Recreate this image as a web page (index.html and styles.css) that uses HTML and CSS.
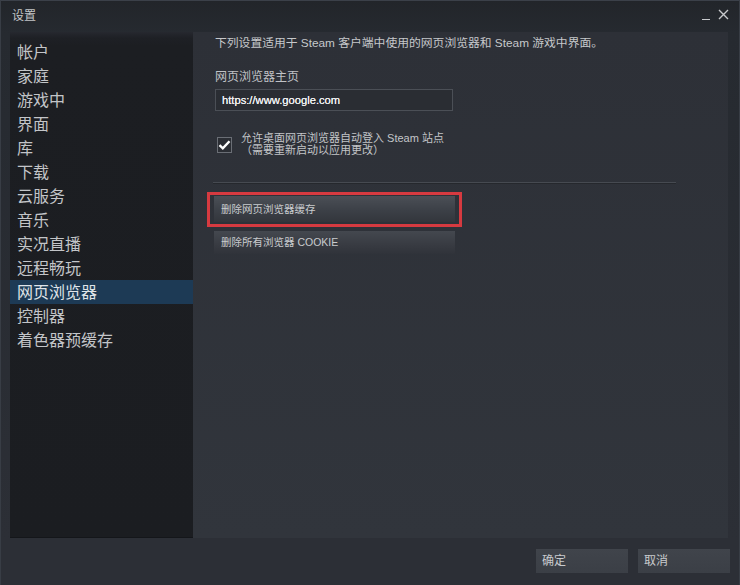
FILE: index.html
```html
<!DOCTYPE html>
<html lang="zh-CN">
<head>
<meta charset="utf-8">
<title>设置</title>
<link rel="stylesheet" href="styles.css">
</head>
<body>
<div class="window">
  <div class="titlebar">
    <span class="title">设置</span>
    <div class="controls">
      <span class="ctl-min"></span>
      <svg class="ctl-close" width="11" height="11" viewBox="0 0 11 11"><path d="M1 1L10 10M10 1L1 10" stroke="#c8cacd" stroke-width="1.4" fill="none"/></svg>
    </div>
  </div>
  <div class="main">
    <nav class="sidebar">
      <div class="item">帐户</div>
      <div class="item">家庭</div>
      <div class="item">游戏中</div>
      <div class="item">界面</div>
      <div class="item">库</div>
      <div class="item">下载</div>
      <div class="item">云服务</div>
      <div class="item">音乐</div>
      <div class="item">实况直播</div>
      <div class="item">远程畅玩</div>
      <div class="item active">网页浏览器</div>
      <div class="item">控制器</div>
      <div class="item">着色器预缓存</div>
    </nav>
    <section class="content">
      <p class="intro">下列设置适用于 Steam 客户端中使用的网页浏览器和 Steam 游戏中界面。</p>
      <p class="label">网页浏览器主页</p>
      <div class="input">https://www.google.com</div>
      <div class="check-row">
        <span class="checkbox"><svg width="13" height="12" viewBox="0 0 13 12"><path d="M1.5 6.2L4.8 9.4L11.5 2.2" stroke="#ffffff" stroke-width="2.4" fill="none"/></svg></span>
        <div class="check-text">
          <div>允许桌面网页浏览器自动登入 Steam 站点</div>
          <div>（需要重新启动以应用更改）</div>
        </div>
      </div>
      <div class="sep"></div>
      <div class="highlight"><div class="btn">删除网页浏览器缓存</div></div>
      <div class="btn btn2">删除所有浏览器 COOKIE</div>
    </section>
  </div>
  <div class="footer">
    <div class="fbtn">确定</div>
    <div class="fbtn">取消</div>
  </div>
</div>
</body>
</html>
```
FILE: styles.css
```css
html, body {
  margin: 0;
  padding: 0;
}
body {
  width: 740px;
  height: 585px;
  overflow: hidden;
  background: #2b2e34;
  font-family: "Liberation Sans", "Noto Sans CJK SC", sans-serif;
}
.window {
  width: 740px;
  height: 585px;
  box-sizing: border-box;
  border-top: 1px solid #3b4049;
  border-left: 1px solid #383d45;
  border-right: 1px solid #383d45;
  background: linear-gradient(180deg, #22252a 0px, #262a30 32px, #2c2f36 540px);
  display: flex;
  flex-direction: column;
}
.titlebar {
  height: 31px;
  display: flex;
  align-items: center;
  justify-content: space-between;
  padding: 0 10px 4px 11px;
  box-sizing: border-box;
}
.title {
  font-size: 12px;
  color: #c3c5c8;
}
.controls {
  display: flex;
  align-items: center;
  gap: 8px;
}
.ctl-min {
  width: 8px;
  height: 1px;
  background: #c8cacd;
  margin-top: 10px;
}
.main {
  display: flex;
  margin-left: 9px;
  height: 506px;
}
.sidebar {
  width: 183px;
  background: linear-gradient(180deg, #26282f 0px, #1e2025 6px, #1c1e22 14px, #1b1d21 100%);
  padding-top: 8px;
  box-sizing: border-box;
  box-shadow: inset 0 -1px 0 #14161a;
}
.item {
  height: 24px;
  line-height: 22px;
  padding: 2px 0 0 7px;
  box-sizing: border-box;
  font-size: 16px;
  color: #c3c5c8;
}
.item.active {
  background: #1d3a55;
  color: #dfe3e8;
}
.content {
  width: 535px;
  background: linear-gradient(180deg, #2d3037 0%, #31353c 100%);
  padding: 1px 0 0 22px;
  box-sizing: border-box;
}
.intro {
  margin: 0;
  font-size: 11.8px;
  line-height: 20px;
  color: #c6c8cb;
}
.label {
  margin: 15px 0 0;
  font-size: 12px;
  line-height: 18px;
  color: #c0c2c6;
}
.input {
  margin-top: 3px;
  width: 238px;
  height: 22px;
  box-sizing: border-box;
  border: 1px solid #4b4f56;
  background: #2a2d33;
  color: #eeeff1;
  font-size: 11.2px;
  line-height: 20px;
  padding-left: 6px;
  text-shadow: 0 0 0.4px #ffffff;
}
.check-row {
  display: flex;
  margin-top: 21px;
  margin-left: 2px;
}
.checkbox {
  width: 15px;
  height: 16px;
  box-sizing: border-box;
  border: 1px solid #6a6e75;
  background: #2b2e34;
  display: flex;
  align-items: center;
  justify-content: center;
  margin-top: 5px;
}
.check-text {
  margin-left: 9px;
  font-size: 11px;
  line-height: 12px;
  color: #c3c5c8;
}
.sep {
  margin: 26px 0 0 -2px;
  width: 463px;
  height: 1px;
  background: #464a51;
  box-shadow: 0 1px 0 #25282d;
}
.highlight {
  margin: 9px 0 0 -8px;
  width: 255px;
  height: 35px;
  box-sizing: border-box;
  border: 3px solid #d63a40;
  padding: 1px 0 0 4px;
}
.btn {
  width: 241px;
  height: 26px;
  box-sizing: border-box;
  background: linear-gradient(180deg, #4b4f56 0%, #3c4047 55%, #33363c 100%);
  color: #c9cbce;
  font-size: 10.5px;
  line-height: 26px;
  padding-left: 7px;
}
.btn2 {
  margin: 4px 0 0 -1px;
  height: 23px;
  line-height: 23px;
  background: linear-gradient(180deg, #44484f 0%, #383b42 60%, #30333a 100%);
}
.footer {
  flex: 1;
  display: flex;
  justify-content: flex-end;
  gap: 10px;
  padding: 11px 9px 0 0;
  box-sizing: border-box;
}
.fbtn {
  width: 92px;
  height: 24px;
  box-sizing: border-box;
  background: linear-gradient(180deg, #40444b 0%, #3b3f46 100%);
  color: #c9cbce;
  font-size: 12px;
  line-height: 24px;
  padding-left: 6px;
}
```
